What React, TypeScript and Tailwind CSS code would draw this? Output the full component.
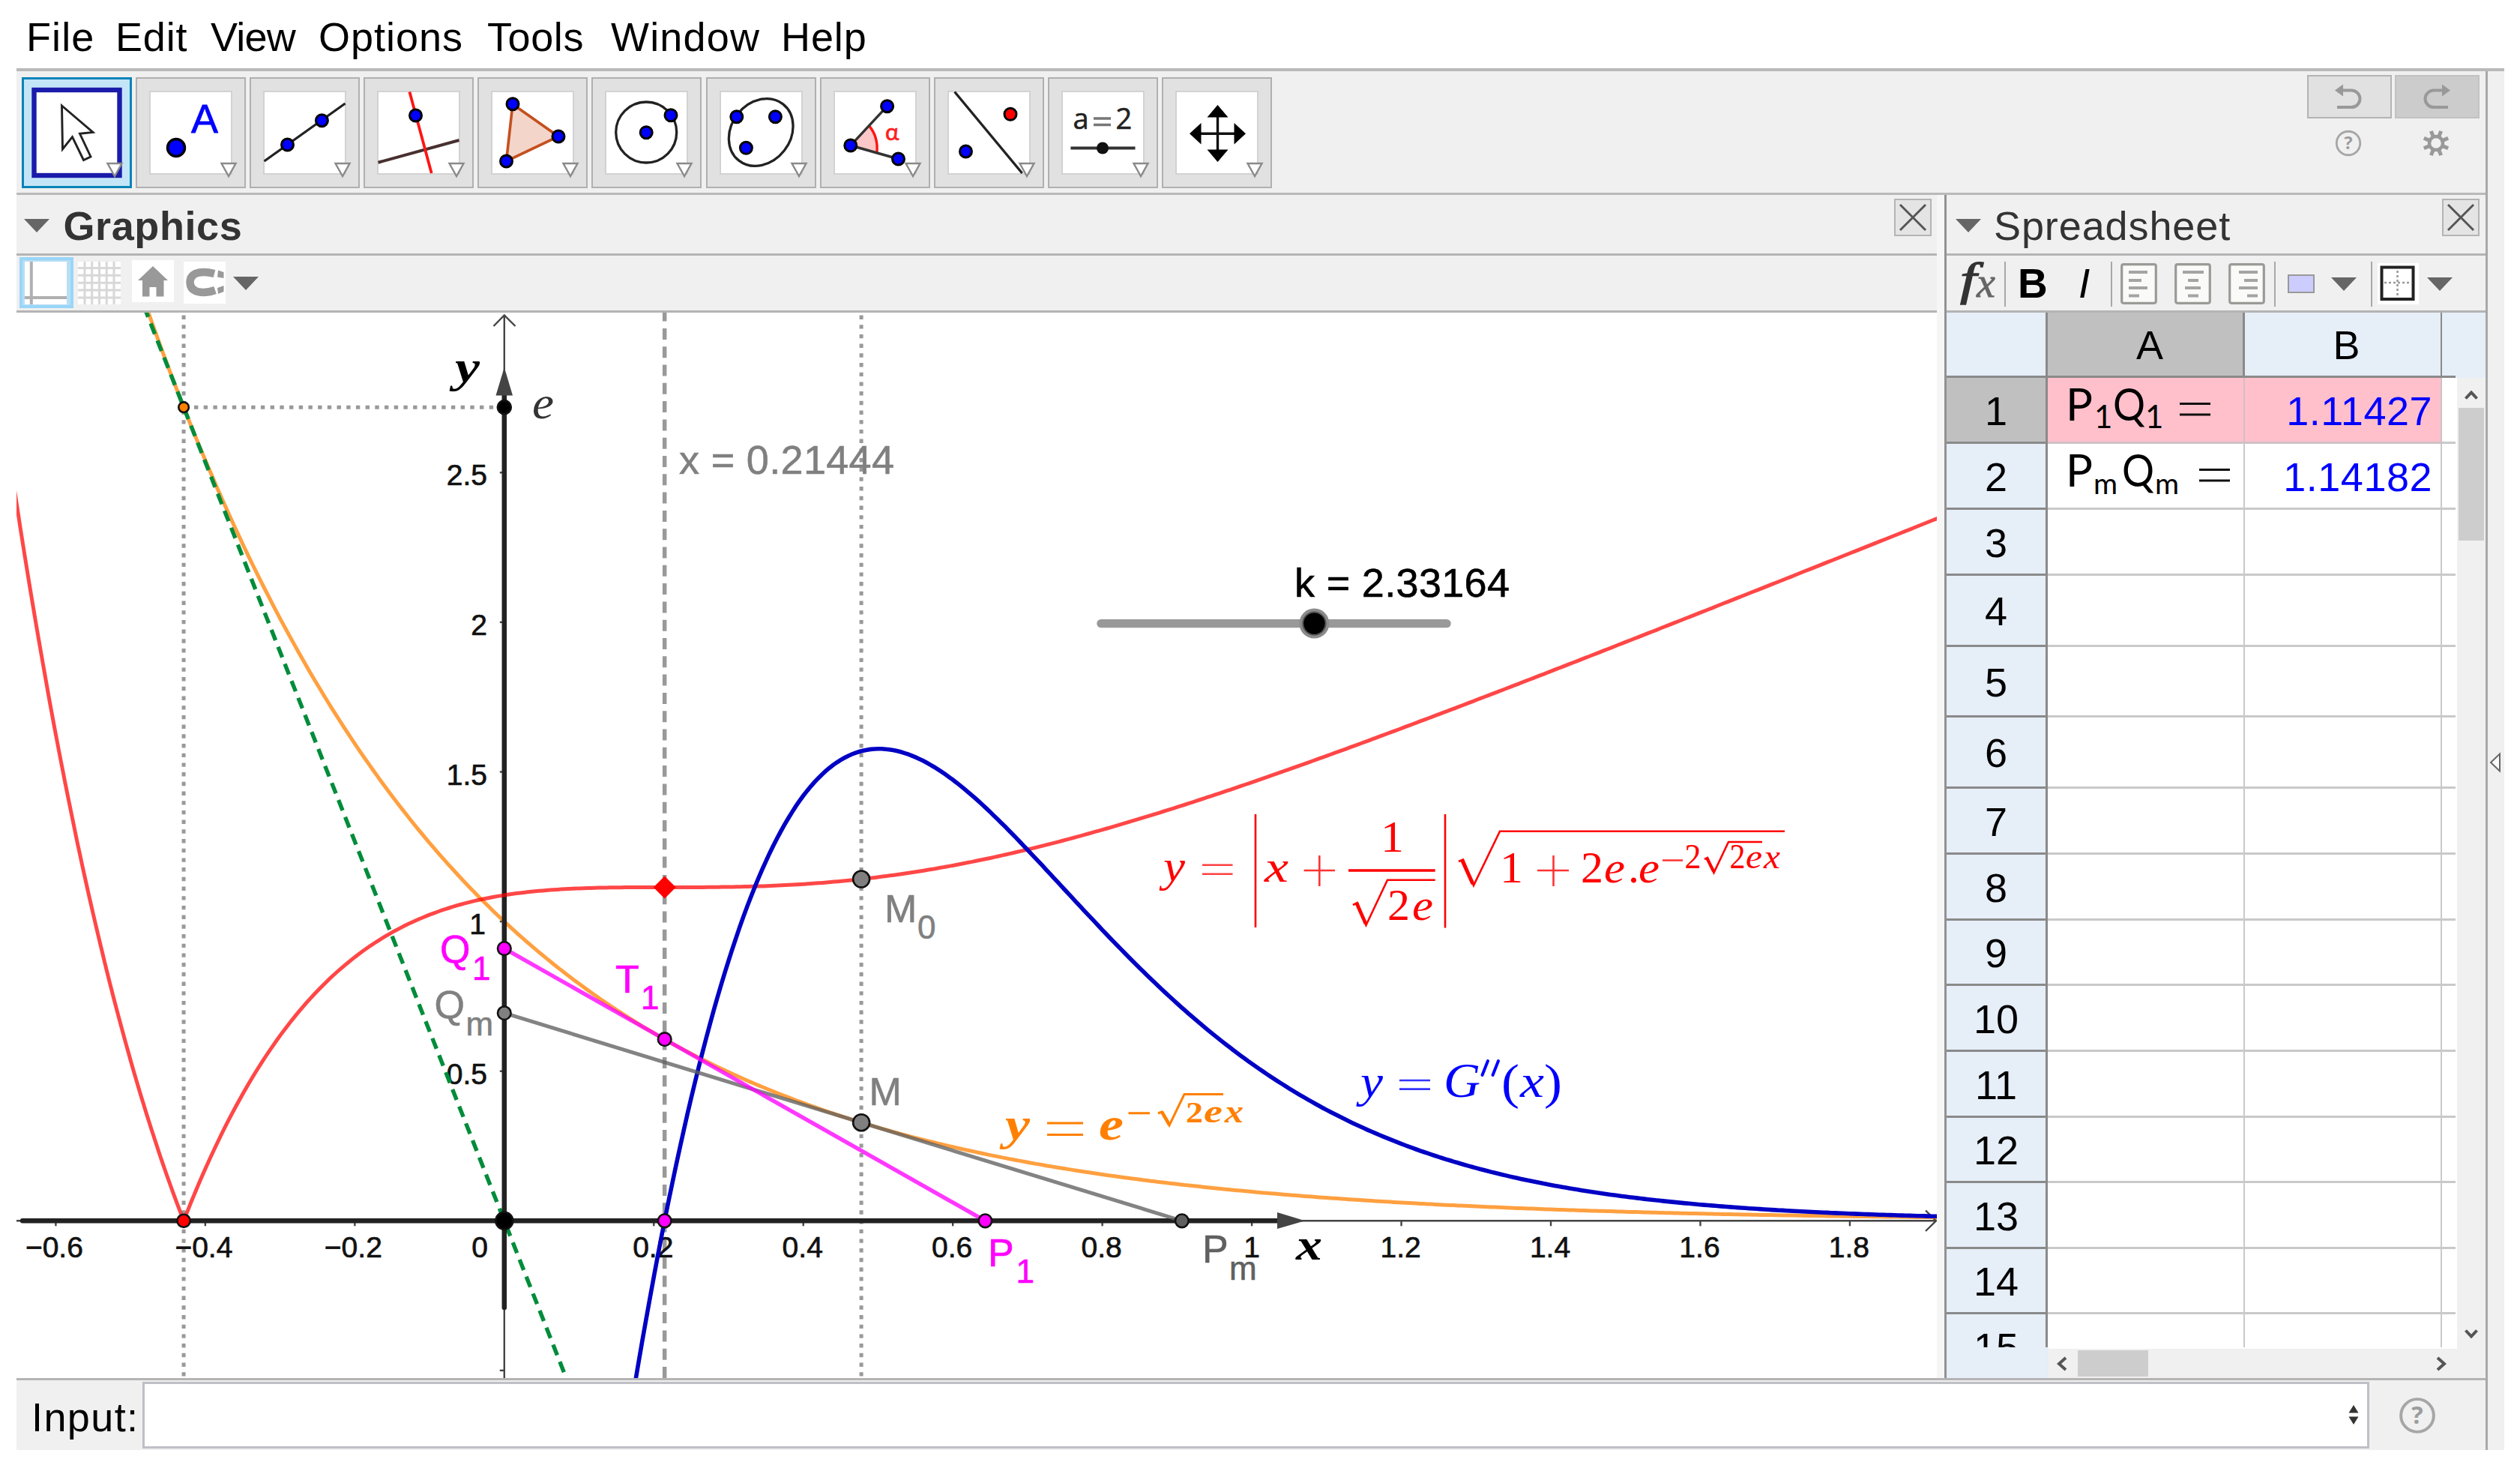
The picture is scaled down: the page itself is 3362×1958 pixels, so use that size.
import React from "react";

const SANS = '"Liberation Sans", Arial, sans-serif';
const SERIF = '"Liberation Serif", "Times New Roman", serif';
const LATO = 'Lato, "Open Sans", sans-serif';

/* ---------- menu ---------- */

const menu = [
  { label: "File", cls: "w-[119px] tracking-[1.1px]" },
  { label: "Edit", cls: "w-[127px] tracking-[0.8px]" },
  { label: "View", cls: "w-[144px] tracking-[-0.8px]" },
  { label: "Options", cls: "w-[225px] tracking-[1px]" },
  { label: "Tools", cls: "w-[165px] tracking-[0.6px]" },
  { label: "Window", cls: "w-[227px] tracking-[1.2px]" },
  { label: "Help", cls: "w-[160px] tracking-[0.9px]" },
];

/* ---------- toolbar icons ---------- */

function Dot({ x, y, r = 8, fill = "#0000ff" }: { x: number; y: number; r?: number; fill?: string }) {
  return <circle cx={x} cy={y} r={r} fill={fill} stroke="#000" strokeWidth={3} />;
}

const tools: { name: string; icon: React.ReactNode }[] = [
  {
    name: "Move",
    icon: (
      <path
        d="M53.5 38 L95 73.5 L77.5 75.3 L92 106 L82.5 110.5 L67.5 79.7 L54.5 96 Z"
        fill="#fff"
        stroke="#222"
        strokeWidth={2.9}
      />
    ),
  },
  {
    name: "Point",
    icon: (
      <>
        <circle cx={54} cy={94} r={11.5} fill="#0000ff" stroke="#000" strokeWidth={3.5} />
        <text x={74} y={73.5} fontSize={54} fontFamily={SANS} fill="#0000ff" stroke="#0000ff" strokeWidth={0.8}>A</text>
      </>
    ),
  },
  {
    name: "Line",
    icon: (
      <>
        <path d="M19.5 112 L127.5 35" stroke="#222" strokeWidth={3.3} />
        <Dot x={50.5} y={90} />
        <Dot x={96.4} y={57.7} />
      </>
    ),
  },
  {
    name: "Perpendicular Line",
    icon: (
      <>
        <path d="M19.5 113.7 L127.5 84" stroke="#483030" strokeWidth={4} />
        <path d="M61.4 19.5 L90.7 128" stroke="#ff1414" strokeWidth={3.8} />
        <Dot x={69.5} y={51} />
      </>
    ),
  },
  {
    name: "Polygon",
    icon: (
      <>
        <path d="M47 36 L108 79 L38.5 112 Z" fill="#f3d5ca" stroke="#c4501e" strokeWidth={3.6} />
        <Dot x={47} y={35.7} />
        <Dot x={108} y={79} />
        <Dot x={38.5} y={112} />
      </>
    ),
  },
  {
    name: "Circle",
    icon: (
      <>
        <circle cx={73.2} cy={73.5} r={40.5} fill="none" stroke="#222" strokeWidth={3.3} />
        <Dot x={73.2} y={73.7} />
        <Dot x={106} y={50.7} />
      </>
    ),
  },
  {
    name: "Ellipse",
    icon: (
      <>
        <ellipse cx={73.2} cy={73.5} rx={47.8} ry={39.5} transform="rotate(-52 73.2 73.5)" fill="none" stroke="#222" strokeWidth={3.3} />
        <Dot x={40.8} y={52.7} />
        <Dot x={92.4} y={52.7} />
        <Dot x={53.4} y={94.3} />
      </>
    ),
  },
  {
    name: "Angle",
    icon: (
      <>
        <path d="M40.8 91 L66 65.3 Q78 80 75.8 100 Z" fill="#ffc8c8" />
        <path d="M66 65.3 Q78 80 75.8 101" fill="none" stroke="#ff1414" strokeWidth={3.4} />
        <path d="M89.6 38.7 L40.8 91 L104.5 109" fill="none" stroke="#333" strokeWidth={3.4} />
        <Dot x={89.6} y={38.7} />
        <Dot x={40.8} y={91} />
        <Dot x={104.5} y={109} />
        <text x={87} y={83.7} fontSize={31} fontFamily={LATO} fill="#ff2020" stroke="#ff2020" strokeWidth={0.7}>α</text>
      </>
    ),
  },
  {
    name: "Reflect",
    icon: (
      <>
        <path d="M27.6 19.5 L117.7 128" stroke="#222" strokeWidth={3.4} />
        <Dot x={102} y={49.3} fill="#ff0000" />
        <Dot x={42.5} y={99} />
      </>
    ),
  },
  {
    name: "Slider",
    icon: (
      <>
        <g fontFamily='"Open Sans", "Noto Sans", sans-serif' fontSize={38} fill="#222" stroke="#222" strokeWidth={0.6}>
          <text x={33.5} y={69.3}>a</text>
          <text x={90.5} y={69.3}>2</text>
        </g>
        <path d="M61 55 H84 M61 63.5 H84" stroke="#777" strokeWidth={3.4} />
        <path d="M30.4 94.5 H116.5" stroke="#333" strokeWidth={4} />
        <circle cx={73} cy={94.5} r={8} fill="#111" />
      </>
    ),
  },
  {
    name: "Move Graphics View",
    icon: (
      <>
        <path d="M74.5 45 V104 M46 75.2 H104" stroke="#111" strokeWidth={3.4} />
        <path
          d="M74.5 37 L88.5 53.5 H60.5 Z M74.5 113 L88.5 96.5 H60.5 Z M37 75.2 L52.5 61 V89.5 Z M112 75.2 L96.5 61 V89.5 Z"
          fill="#000"
        />
      </>
    ),
  },
];

function Toolbar() {
  return (
    <div className="flex h-[165px] justify-between border-b-3 border-[#b9b9b9] bg-[#f0f0f0]">
      <div className="flex gap-[5.2px] pt-2 pl-[6.500px]">
        {tools.map((tool, i) => (
          <button
            key={tool.name}
            aria-label={tool.name}
            className={
              i === 0
                ? "h-[148px] w-[147px] bg-[#c4e5f8] outline-3 -outline-offset-3 outline-[#0a84b8]"
                : "h-[148px] w-[147px] bg-[#e1e1e1] outline-2 -outline-offset-2 outline-[#b0b0b0]"
            }
          >
            <svg width={147} height={148} viewBox="0 0 147 148">
              {i === 0 ? (
                <rect x={16.5} y={17} width={114} height={114} fill="#fff" stroke="#1b1bab" strokeWidth={6.4} />
              ) : (
                <rect x={19} y={19} width={109} height={110} fill="#fff" stroke="#d2d2d2" strokeWidth={2} />
              )}
              {tool.icon}
              <path d="M114.5 115 H133.5 L124 132 Z" fill="#fff" stroke="#8a8a8a" strokeWidth={2.4} />
            </svg>
          </button>
        ))}
      </div>
      <div className="grid h-[120px] grid-cols-[113px_113px] grid-rows-[58px_58px] gap-x-[4px] pt-[5px] pr-[8px]">
        <button aria-label="Undo" className="border-2 border-[#b4b4b4] bg-[#e1e1e1]">
          <svg width={109} height={54} viewBox="2 2 109 54" fill="none">
            <path d="M45 20.5 H59 a11.5 11.3 0 0 1 0 22.6 H40" stroke="#999" strokeWidth={4} />
            <path d="M37 20.5 L48 12.5 V28.5 Z" fill="#999" />
          </svg>
        </button>
        <button aria-label="Redo" className="border-2 border-[#c2c2c2] bg-[#cccccc]">
          <svg width={109} height={54} viewBox="1 2 109 54" fill="none">
            <path d="M65 20.5 H51 a11.5 11.3 0 0 0 0 22.6 H70" stroke="#999" strokeWidth={4} />
            <path d="M73 20.5 L62 12.5 V28.5 Z" fill="#999" />
          </svg>
        </button>
        <div className="flex items-center justify-center pt-[7px] pr-[3px]">
          <HelpIcon size={36} />
        </div>
        <div className="flex items-center justify-center pt-[7px] pr-[3px]">
          <svg width={36} height={36} viewBox="-18 -18 36 36">
            <circle r={9} fill="none" stroke="#999" strokeWidth={4.4} />
            {[22.5, 67.5, 112.5, 157.5, 202.5, 247.5, 292.5, 337.5].map((a) => (
              <path key={a} d="M0 -9.5 V-17.5" stroke="#999" strokeWidth={5} transform={`rotate(${a})`} />
            ))}
          </svg>
        </div>
      </div>
    </div>
  );
}

function HelpIcon({ size }: { size: number }) {
  return (
    <svg width={size} height={size} viewBox="0 0 48 48">
      <circle cx={24} cy={24} r={21} fill="none" stroke="#a6a6a6" strokeWidth={3.8} />
      <text x={24} y={35} textAnchor="middle" fontFamily='"Open Sans", sans-serif' fontWeight={700} fontSize={31} fill="#9c9c9c">
        ?
      </text>
    </svg>
  );
}

function Caret() {
  return (
    <svg width={34} height={18} viewBox="0 0 34 18">
      <path d="M0 0 H34 L17 18 Z" fill="#666" />
    </svg>
  );
}

function CloseButton() {
  return (
    <button aria-label="Close" className="mt-[5px] h-[50px] w-[50px] border-2 border-[#b4b4b4] bg-[#e4e4e4]">
      <svg width={46} height={46} viewBox="0 0 46 46">
        <path d="M6 6 L40 40 M40 6 L6 40" stroke="#555" strokeWidth={3} />
      </svg>
    </button>
  );
}

/* ---------- graph ---------- */

const OX = 672.8;
const OY = 1628.3;
const UX = 997.3;
const UY = 399.2;
const K = 2.33164;
const px = (x: number) => OX + x * UX;
const py = (y: number) => OY - y * UY;

function curve(f: (x: number) => number, from: number, to: number, step = 0.005) {
  let d = "";
  for (let x = from; x <= to + 1e-9; x += step) {
    d += `${d ? "L" : "M"}${px(x).toFixed(1)} ${py(f(x)).toFixed(1)}`;
  }
  return d;
}

const expo = (x: number) => Math.exp(-K * x);
const gap = (x: number) => Math.abs(x + 1 / K) * Math.sqrt(1 + K * K * Math.exp(-2 * K * x));
const second = (x: number) => {
  const w = K * K * Math.exp(-2 * K * x);
  const s = Math.sqrt(1 + w);
  return (-2 * K * w) / s + (x + 1 / K) * K * K * w * (2 / s - w / (s * s * s));
};

type GlyphProps = { c: string; x: number; y: number; s: number; w?: number; roman?: boolean; bold?: boolean };

function Glyph({ c, x, y, s, w, roman, bold }: GlyphProps) {
  return (
    <text
      x={x}
      y={y}
      fontSize={s}
      fontFamily={SERIF}
      fontStyle={roman ? "normal" : "italic"}
      fontWeight={bold ? 700 : 400}
      textLength={w}
      lengthAdjust="spacingAndGlyphs"
    >
      {c}
    </text>
  );
}

function Label({ c, sub, x, y, sx, sy, color }: { c: string; sub?: string; x: number; y: number; sx?: number; sy?: number; color: string }) {
  return (
    <g fill={color} stroke={color} strokeWidth={0.6} fontFamily={SANS}>
      <text x={x} y={y} fontSize={52}>{c}</text>
      {sub && <text x={sx} y={sy} fontSize={44}>{sub}</text>}
    </g>
  );
}

const xTicks: [number, string][] = [
  [-0.6, "−0.6"], [-0.4, "−0.4"], [-0.2, "−0.2"], [0.2, "0.2"], [0.4, "0.4"], [0.6, "0.6"],
  [0.8, "0.8"], [1, "1"], [1.2, "1.2"], [1.4, "1.4"], [1.6, "1.6"], [1.8, "1.8"],
];

function Graph() {
  const T = 1 / (2 * K);
  const M = 0.4776;
  return (
    <svg className="block" width={2562} height={1421} viewBox="22 417 2562 1421" fill="none">
      <rect x={22} y={417} width={2562} height={1421} fill="#fff" />

      {/* guide lines */}
      <g stroke="#999" strokeWidth={5}>
        <path d={`M${px(-1 / K)} 420.5 V1838`} strokeDasharray="5.4 7.3" />
        <path d={`M${px(M)} 420.5 V1838`} strokeDasharray="5.4 7.3" />
        <path d={`M259 ${py(Math.E)} H662`} strokeDasharray="5.4 7.3" />
        <path d={`M${px(T)} 1838 V417`} strokeDasharray="15 9.3" strokeWidth={5.5} />
      </g>

      {/* axes */}
      <g stroke="#444" strokeWidth={2.4}>
        <path d={`M22 ${OY} H2583 M2569 1614.5 L2583 ${OY} L2569 1642`} />
        <path d={`M${OX} 1838 V420 M658.5 435 L${OX} 420.5 L687.5 435`} />
        {xTicks.map(([v]) => (
          <path key={v} d={`M${px(v)} ${OY} v7`} />
        ))}
        {[-0.5, 0.5, 1, 1.5, 2, 2.5].map((v) => (
          <path key={v} d={`M${OX} ${py(v)} h-6`} />
        ))}
      </g>
      <g fill="#111" stroke="#111" strokeWidth={0.7} fontFamily={SANS} fontSize={39}>
        {xTicks.map(([v, t]) => (
          <text key={t} x={px(v) - (v < 0 ? 2 : v === 1 ? 0 : 1)} y={1676.5} textAnchor="middle">
            {t}
          </text>
        ))}
        <text x={640} y={1676.5} textAnchor="middle">0</text>
        {[0.5, 1, 1.5, 2, 2.5].map((v) => (
          <text key={v} x={v === 1 ? 648 : 650} y={py(v) + 17} textAnchor="end">
            {v}
          </text>
        ))}
      </g>

      {/* function curves */}
      <path d={curve(expo, -0.49, 1.92)} stroke="#ff8000" strokeOpacity={0.75} strokeWidth={5} />
      <path d={curve(gap, -0.66, -1 / K, 0.0025)} stroke="#ff0000" strokeOpacity={0.72} strokeWidth={5} />
      <path d={`M${px(-0.482)} ${py(0.482 * K * Math.E)} L${px(0.09)} ${py(-0.09 * K * Math.E)}`} stroke="#008c3a" strokeWidth={5.4} strokeDasharray="15 9.4" />

      {/* segments on the axes */}
      <g stroke="#222" strokeWidth={6.5}>
        <path d={`M30 ${OY} H1710`} strokeLinecap="round" />
        <path d={`M${OX} 1744 V520`} strokeLinecap="round" />
      </g>
      <path d={`M1741 ${OY} L1704 1617 V1639 Z M${OX} 490 L661.5 527.5 H684 Z`} fill="#444" />

      <path d={curve(gap, -1 / K, 1.93)} stroke="#ff0000" strokeOpacity={0.72} strokeWidth={5} />
      <path d={curve(second, 0.17, 1.93)} stroke="#0000c4" strokeWidth={5.6} />
      <path d={`M${OX} ${py(expo(M) * (1 + K * M))} L${px(M + 1 / K)} ${OY}`} stroke="#606060" strokeOpacity={0.78} strokeWidth={5} />
      <path d={`M${OX} ${py(1.5 * Math.exp(-0.5))} L${px(T + 1 / K)} ${OY}`} stroke="#ff00ff" strokeOpacity={0.78} strokeWidth={5.4} />

      {/* points */}
      <g stroke="#111" strokeWidth={2.6}>
        <circle cx={px(-1 / K)} cy={py(Math.E)} r={6.8} fill="#ff8000" />
        <circle cx={px(-1 / K)} cy={OY} r={8.6} fill="#ff0000" />
        <circle cx={OX} cy={py(Math.E)} r={9} fill="#000" />
        <circle cx={OX} cy={OY} r={11.5} fill="#000" />
        <circle cx={OX} cy={py(1.5 * Math.exp(-0.5))} r={8.8} fill="#ff00ff" />
        <circle cx={px(T)} cy={py(Math.exp(-0.5))} r={8.8} fill="#ff00ff" />
        <circle cx={px(T)} cy={OY} r={8.8} fill="#ff00ff" />
        <circle cx={px(T + 1 / K)} cy={OY} r={8.8} fill="#ff00ff" />
        <circle cx={OX} cy={py(expo(M) * (1 + K * M))} r={8.8} fill="#808080" />
        <circle cx={px(M + 1 / K)} cy={OY} r={8.8} fill="#606060" />
        <circle cx={px(M)} cy={py(expo(M))} r={11} fill="#808080" />
        <circle cx={px(M)} cy={py(gap(M))} r={11} fill="#808080" />
      </g>
      <path d={`M${px(T)} ${py(gap(T)) - 15} l15 15 l-15 15 l-15 -15 Z`} fill="#ff0000" />

      {/* point labels */}
      <Label c="Q" sub="1" x={587} y={1284} sx={630} sy={1307} color="#ff00ff" />
      <Label c="Q" sub="m" x={579.5} y={1357.5} sx={621.5} sy={1380.5} color="#808080" />
      <Label c="T" sub="1" x={821} y={1324} sx={855} sy={1346} color="#ff00ff" />
      <Label c="M" sub="0" x={1180} y={1230} sx={1224} sy={1252} color="#808080" />
      <Label c="M" x={1159.5} y={1474} color="#808080" />
      <Label c="P" sub="1" x={1318} y={1688.5} sx={1355.5} sy={1711} color="#ff00ff" />
      <Label c="P" sub="m" x={1604} y={1684} sx={1640} sy={1707} color="#606060" />
      <text x={906} y={631.5} fontSize={54} fontFamily={SANS} fill="#808080" stroke="#808080" strokeWidth={0.6} textLength={287}>x = 0.21444</text>

      {/* slider */}
      <text x={1727} y={795.5} fontSize={54} fontFamily={SANS} fill="#000" stroke="#000" strokeWidth={0.6} textLength={287}>k = 2.33164</text>
      <path d="M1469 831.6 H1930" stroke="#999" strokeWidth={11.4} strokeLinecap="round" />
      <circle cx={1753.4} cy={831.6} r={20} fill="#8c8c8c" />
      <circle cx={1753.4} cy={831.6} r={15.2} fill="#000" stroke="#555" strokeWidth={2} />

      {/* axis names */}
      <g fill="#000">
        <Glyph c="y" x={607} y={509} s={60} w={33} bold />
        <Glyph c="x" x={1729} y={1680} s={60} w={35} bold />
      </g>
      <g fill="#333">
        <Glyph c="e" x={710} y={558} s={62} w={29} />
      </g>

      {/* exponential formula */}
      <g fill="#ff8000" stroke="none">
        <Glyph c="y" x={1341} y={1520} s={61} w={33} bold />
        <Glyph c="e" x={1466} y={1520} s={61} w={33} bold />
        <Glyph c="2" x={1582} y={1496.5} s={41} w={23} roman bold />
        <Glyph c="e" x={1606} y={1496.5} s={45} w={25} bold />
        <Glyph c="x" x={1634} y={1496.5} s={45} w={25} bold />
      </g>
      <g stroke="#ff8000" strokeWidth={3}>
        <path d="M1397 1498 H1445 M1397 1513.5 H1445 M1505.5 1484.7 H1534" />
        <path d="M1545 1485 L1550 1483 L1560 1501 L1580 1459.5 H1632" />
        <path d="M1550 1483 L1560 1500" strokeWidth={4.5} />
      </g>

      {/* second derivative formula */}
      <g fill="#0000ff">
        <Glyph c="y" x={1815} y={1462.5} s={62} w={30} />
        <Glyph c="G" x={1926} y={1462.5} s={65} w={49} />
        <Glyph c="(" x={2003} y={1465} s={66} w={24} roman />
        <Glyph c="x" x={2028} y={1462.5} s={62} w={32} />
        <Glyph c=")" x={2060} y={1465} s={66} w={24} roman />
      </g>
      <path d="M1867 1441 H1908 M1867 1452.6 H1908" stroke="#0000ff" strokeWidth={2.6} strokeOpacity={0.8} />
      <path d="M1985 1415 L1977.5 1434 M1999 1415 L1991.5 1434" stroke="#0000ff" strokeWidth={4} strokeLinecap="round" />

      {/* distance formula */}
      <g fill="#ff0000">
        <Glyph c="y" x={1552} y={1175} s={60} w={29} />
        <Glyph c="x" x={1687} y={1175.5} s={60} w={32} />
        <Glyph c="1" x={1842} y={1135.5} s={60} w={31} roman />
        <Glyph c="2" x={1851} y={1227} s={60} w={30} roman />
        <Glyph c="e" x={1884} y={1227} s={60} w={28} />
        <Glyph c="1" x={2001} y={1177} s={60} w={31} roman />
        <Glyph c="2" x={2109} y={1177} s={60} w={30} roman />
        <Glyph c="e" x={2140} y={1177} s={60} w={28} />
        <Glyph c="." x={2172} y={1177} s={60} w={15} roman />
        <Glyph c="e" x={2186} y={1177} s={60} w={28} />
        <Glyph c="2" x={2247.5} y={1158} s={46} w={22} roman />
        <Glyph c="2" x={2307.5} y={1158} s={46} w={21} roman />
        <Glyph c="e" x={2329} y={1158} s={46} w={22} />
        <Glyph c="x" x={2353} y={1158} s={46} w={22} />
      </g>
      <g stroke="#ff0000" strokeWidth={2.6}>
        <path d="M1604 1153.8 H1644.5 M1604 1165.8 H1644.5" strokeOpacity={0.75} />
        <path d="M1739.6 1161 H1781 M1760.3 1141 V1182 M2051 1161 H2093 M2072.5 1141 V1182 M2218 1147.5 H2245" strokeOpacity={0.8} />
        <path d="M1675 1086 V1237 M1928 1086 V1237.5" />
        <path d="M1799 1161 H1914.7" strokeWidth={3.6} />
        <path d="M1805 1207 L1811 1204 L1822.5 1234 L1851 1173.8 H1914.7" />
        <path d="M1810 1205 L1822 1232" strokeWidth={4.6} />
        <path d="M1946 1149 L1952 1146.5 L1966 1181 L2001 1108.7 H2381" />
        <path d="M1951 1148 L1965 1179" strokeWidth={5} />
        <path d="M2274 1146 L2278 1144 L2286.5 1164 L2306 1123 H2351" />
        <path d="M2277.5 1145 L2286 1162" strokeWidth={4} />
      </g>
    </svg>
  );
}

function GraphicsPanel() {
  return (
    <section className="flex w-[2562px] flex-col bg-[#f0f0f0]">
      <header className="flex h-[81px] justify-between border-b-3 border-[#b4b4b4] pr-[7px] pl-[10px]">
        <div className="flex items-center gap-[18.500px] pt-[3px]">
          <Caret />
          <h2 className="text-[54px] leading-none font-bold tracking-[0.6px] text-[#333]">Graphics</h2>
        </div>
        <CloseButton />
      </header>
      <div className="flex h-[76px] items-start border-b-3 border-[#b4b4b4] pt-[2px] pl-[4px]">
        <svg width={72} height={68} viewBox="0 0 72 68">
          <rect width={72} height={68} fill="#99d6f9" />
          <rect x={4} y={4} width={64} height={60} fill="#b9def4" />
          <rect x={7} y={6} width={56} height={57} fill="#fff" />
          <path d="M15.8 6 V63 M7 54 H63" stroke="#b0b0b0" strokeWidth={4} />
        </svg>
        <svg className="mt-[6px] ml-[6px]" width={57} height={57} viewBox="0 0 57 57">
          <rect width={57} height={57} fill="#fff" />
          <path d="M9 0 V57 M18.7 0 V57 M28.5 0 V57 M38.2 0 V57 M48 0 V57 M0 8.500 H57 M0 18.300 H57 M0 28.200 H57 M0 38 H57 M0 48 H57" stroke="#d8d8d8" strokeWidth={3} />
        </svg>
        <svg className="mt-[4px] ml-[15px]" width={56} height={56} viewBox="0 0 56 56">
          <rect width={56} height={56} fill="#fff" />
          <path d="M28 8 L48 27 H42.500 V48.500 H32.500 V36 H23.500 V48.500 H14 V27 H8 Z" fill="#999" />
        </svg>
        <svg className="mt-[6px] ml-[13px]" width={56} height={56} viewBox="0 0 56 56">
          <rect width={56} height={56} fill="#fff" />
          <path d="M41 16 C28 12.500 9 12 8.500 27.500 C9 43 28 43 42 38" fill="none" stroke="#999" strokeWidth={10.500} />
          <path d="M46 11.500 L53.500 14 V22 L45 20.500 Z M45 35 L53.500 32 V40 L46 43 Z" fill="#999" />
        </svg>
        <div className="mt-[26px] ml-[10px]">
          <Caret />
        </div>
      </div>
      <Graph />
    </section>
  );
}

/* ---------- spreadsheet ---------- */

function Divider() {
  return <div className="h-[60px] w-[2px] bg-[#a8a8a8]" />;
}

function AlignIcon({ d }: { d: string }) {
  return (
    <svg width={49} height={55} viewBox="0 0 49 55">
      <rect x={1.700} y={1.700} width={45.600} height={51.600} rx={2.500} fill="#fafaf8" stroke="#9a9b96" strokeWidth={3.200} />
      <path d={d} stroke="#a4a4a4" strokeWidth={4} />
    </svg>
  );
}

const rowHeights = [
  "h-[88px]", "h-[88px]", "h-[88px]", "h-[95px]", "h-[94px]", "h-[95px]", "h-[88px]", "h-[88px]",
  "h-[87px]", "h-[88px]", "h-[88px]", "h-[87px]", "h-[88px]", "h-[87px]", "h-[88px]",
];
const values = ["1.11427", "1.14182"];

function SegmentName({ sub, subSize, xs }: { sub: string; subSize: number; xs: number[] }) {
  return (
    <svg width={262} height={80} viewBox="2731 504 262 80" fontFamily={LATO} fill="#000">
      <text x={2755} y={561} fontSize={60}>P</text>
      <text x={xs[0]} y={571} fontSize={subSize}>{sub}</text>
      <text x={xs[1]} y={561} fontSize={60} textLength={43} lengthAdjust="spacingAndGlyphs">Q</text>
      <text x={xs[2]} y={571} fontSize={subSize}>{sub}</text>
      <path d={`M${xs[3]} 538.500 h41 M${xs[3]} 553 h41`} stroke="#111" strokeWidth={2.800} />
    </svg>
  );
}

function SpreadsheetPanel() {
  return (
    <section className="flex w-[722px] flex-col border-l-3 border-[#929292] bg-[#f0f0f0]">
      <header className="flex h-[81px] justify-between border-b-3 border-[#b4b4b4] pr-[8px] pl-[12px]">
        <div className="flex items-center gap-[17px] pt-[3px]">
          <Caret />
          <h2 className="text-[54px] leading-none tracking-[0.9px] text-[#333]">Spreadsheet</h2>
        </div>
        <CloseButton />
      </header>
      <div className="flex h-[76px] items-center border-b-3 border-[#b4b4b4] pt-[2px] pl-[8px]">
        <svg className="overflow-visible" width={66} height={68} viewBox="0 0 66 68" fontFamily={SERIF} fontStyle="italic" fill="#333">
          <text x={10} y={48} fontSize={62} stroke="#333" strokeWidth={1.4} textLength={22} lengthAdjust="spacingAndGlyphs">f</text>
          <text x={32} y={51} fontSize={56} fill="#666" stroke="#666" strokeWidth={0.8}>x</text>
        </svg>
        <div className="ml-[3px]"><Divider /></div>
        <b className="ml-[16px] w-[40px] text-[55px] leading-none">B</b>
        <i className="ml-[38px] w-[46px] pl-[3px] text-[55px] leading-none">I</i>
        <Divider />
        <div className="ml-[11px] flex gap-[23px]">
          <AlignIcon d="M11 12 H36 M11 23 H28 M11 33 H36 M11 43.500 H25" />
          <AlignIcon d="M11 12 H39 M18 23 H32 M14 33 H35 M18 43.500 H32" />
          <AlignIcon d="M14 12 H39 M21 23 H39 M14 33 H39 M25 43.500 H39" />
        </div>
        <div className="ml-[12px]"><Divider /></div>
        <div className="ml-[16px] h-[25px] w-[36px] border-2 border-[#999] bg-[#ccccff]" />
        <div className="ml-[22px]"><Caret /></div>
        <div className="ml-[19px]"><Divider /></div>
        <svg className="ml-[7px]" width={55} height={55} viewBox="0 0 55 55">
          <rect width={55} height={55} fill="#fff" />
          <rect x={5.500} y={5.500} width={42} height={42.500} fill="#fff" stroke="#222" strokeWidth={4} />
          <path d="M26.500 10 V46 M9 26 H46" stroke="#999" strokeWidth={2.600} strokeDasharray="3 3" />
        </svg>
        <div className="ml-[11px]"><Caret /></div>
      </div>

      <div className="flex h-[87px] bg-[#e6eef8] text-[54px] leading-none">
        <div className="w-[135px] border-r-3 border-b-3 border-[#8a8a8a]" />
        <div className="flex w-[263px] items-center justify-center border-r-3 border-b-3 border-[#8a8a8a] bg-[#c0c0c0] pt-[2px] pl-[12px]">A</div>
        <div className="flex w-[263px] items-center justify-center border-r-2 border-b-3 border-[#8a8a8a] pt-[2px] pl-[10px]">B</div>
        <div className="w-[18px] border-b-3 border-[#8a8a8a]" />
      </div>

      <div className="flex h-[1293px]">
        <div className="w-[679px] overflow-hidden bg-white text-[54px] leading-none">
          {rowHeights.map((h, i) => (
            <div key={i} className={`flex ${h}`}>
              <div
                className={
                  i === 0
                    ? "flex w-[135px] items-center justify-center border-r-3 border-b-3 border-[#8a8a8a] bg-[#c0c0c0] pt-[2px]"
                    : "flex w-[135px] items-center justify-center border-r-3 border-b-3 border-[#8a8a8a] bg-[#e6eef8] pt-[2px]"
                }
              >
                {i + 1}
              </div>
              <div className={i === 0 ? "w-[263px] border-r-2 border-b-3 border-[#d0c0c6] bg-[#ffc0cb]" : "w-[263px] border-r-2 border-b-3 border-[#c9c9c9]"}>
                {i === 0 && <SegmentName sub="1" subSize={42} xs={[2793, 2818, 2861, 2907]} />}
                {i === 1 && <SegmentName sub="m" subSize={39} xs={[2792, 2830, 2874, 2933]} />}
              </div>
              <div
                className={
                  i === 0
                    ? "flex w-[263px] items-center justify-end border-r-2 border-b-3 border-[#d0c0c6] bg-[#ffc0cb] pt-[2px] pr-[11px] tracking-[0.5px] text-[#0000ff]"
                    : "flex w-[263px] items-center justify-end border-r-2 border-b-3 border-[#c9c9c9] pt-[2px] pr-[11px] tracking-[0.5px] text-[#0000ff]"
                }
              >
                {values[i]}
              </div>
              <div className="w-[18px] border-b-3 border-[#c9c9c9]" />
            </div>
          ))}
        </div>
        <div className="flex w-[40px] flex-col items-center justify-between border-l-2 border-white bg-[#f0f0f0] pt-[17px] pb-[12px]">
          <div className="flex flex-col items-center gap-[11px]">
            <svg width={18} height={12} viewBox="0 0 18 12" fill="none">
              <path d="M1.500 10.500 L9 2.500 L16.500 10.500" stroke="#555" strokeWidth={4} />
            </svg>
            <div className="h-[177px] w-[34px] bg-[#cdcdcd]" />
          </div>
          <svg width={18} height={12} viewBox="0 0 18 12" fill="none">
            <path d="M1.500 1.500 L9 9.500 L16.500 1.500" stroke="#555" strokeWidth={4} />
          </svg>
        </div>
      </div>

      <div className="flex h-[41px] bg-[#f0f0f0]">
        <div className="w-[136px] bg-[#e6eef8]" />
        <div className="flex w-[545px] items-center justify-between border-t-2 border-white pl-[11px]">
          <div className="flex items-center gap-[14px]">
            <svg width={14} height={20} viewBox="0 0 14 20" fill="none">
              <path d="M12 2 L3 10 L12 18" stroke="#555" strokeWidth={4} />
            </svg>
            <div className="h-[35px] w-[94px] bg-[#cdcdcd]" />
          </div>
          <svg className="mr-[14px]" width={14} height={20} viewBox="0 0 14 20" fill="none">
            <path d="M2 2 L11 10 L2 18" stroke="#555" strokeWidth={4} />
          </svg>
        </div>
      </div>
    </section>
  );
}

function InputBar() {
  return (
    <div className="flex h-[96px] items-center border-t-3 border-[#b4b4b4] bg-[#f0f0f0] pb-[1px]">
      <label className="w-[168px] pt-[5px] pl-[20px] text-[54px] leading-none tracking-[1.4px] whitespace-nowrap">Input:</label>
      <div className="flex h-[89px] w-[2971px] items-center justify-end border-3 border-[#bfbfc6] bg-white pr-[11px]">
        <svg width={14} height={26} viewBox="0 0 14 26">
          <path d="M7 0 L13.500 10.500 H0.500 Z M7 26 L13.500 15.500 H0.500 Z" fill="#333" />
        </svg>
      </div>
      <div className="ml-[39px] flex pt-[2px]">
        <HelpIcon size={50} />
      </div>
    </div>
  );
}

export default function App() {
  return (
    <div className="flex h-[1958px] w-[3362px] flex-col overflow-hidden bg-white pl-[22px] font-['Liberation_Sans',Arial,sans-serif] text-black">
      <nav className="flex h-[91px] shrink-0 items-center pt-[7px] pl-[13px] text-[54px] leading-none">
        {menu.map((m) => (
          <div key={m.label} className={`${m.cls} shrink-0 whitespace-nowrap`}>
            {m.label}
          </div>
        ))}
      </nav>
      <div className="flex h-[1843px] w-[3319px] border-t-4 border-[#b9b9b9]">
        <main className="flex w-[3297px] flex-col border-r-3 border-[#a8a8a8]">
          <Toolbar />
          <div className="flex h-[1578px] bg-[#f6f6f6]">
            <GraphicsPanel />
            <div className="w-[10px] shrink-0" />
            <SpreadsheetPanel />
          </div>
          <InputBar />
        </main>
        <aside className="flex flex-1 justify-center bg-[#f0f0f0] pt-[908px] pr-[2px]">
          <svg width={16} height={28} viewBox="0 0 16 28">
            <path d="M14 2.500 V25.500 L2 14 Z" fill="#fafafa" stroke="#666" strokeWidth={2} />
          </svg>
        </aside>
      </div>
    </div>
  );
}
